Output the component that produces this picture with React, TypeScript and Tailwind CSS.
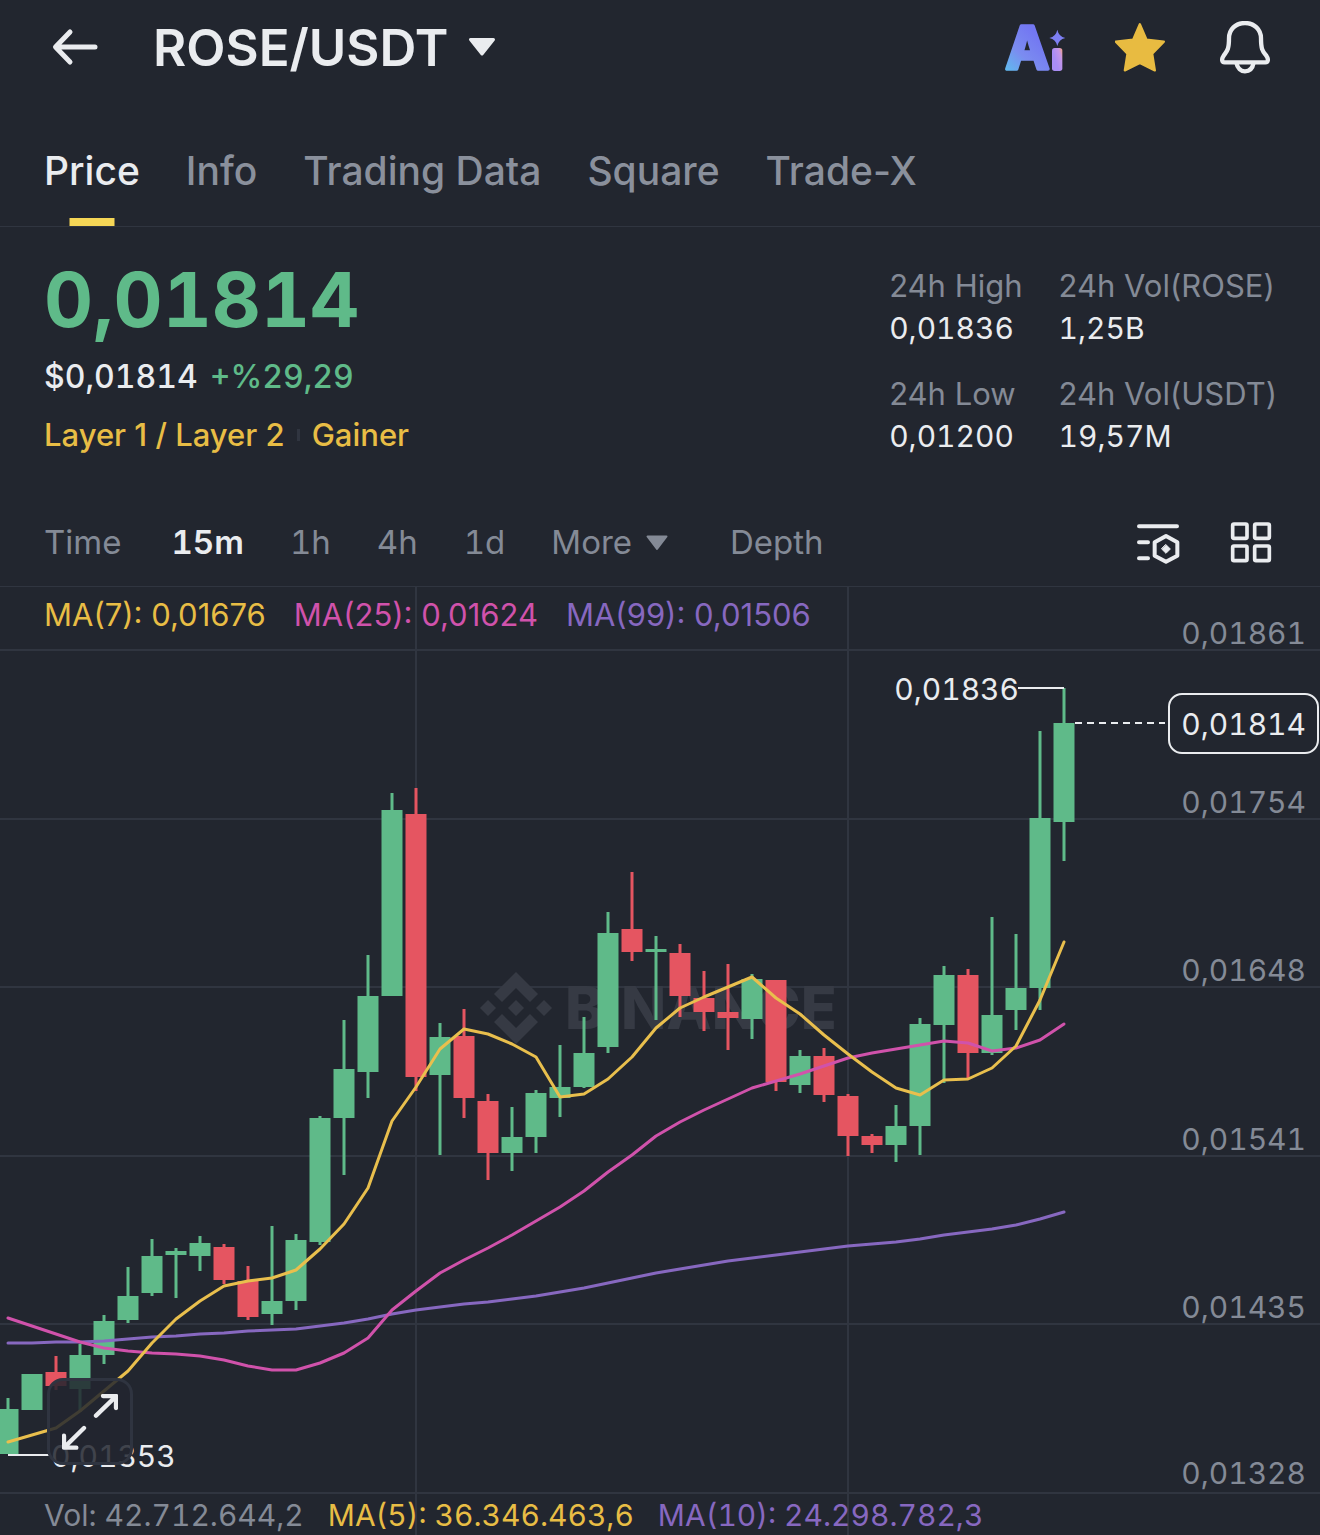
import React from "react";

type Candle = [high: number, bodyTop: number, bodyBottom: number, low: number, down?: boolean];

const GREEN = "#5fba89";
const RED = "#e55561";
const STEP = 24;
const FIRST_X = 8;

const candles: Candle[] = [
  [1398, 1409, 1454, 1454],
  [1374, 1374, 1410, 1410],
  [1356, 1372, 1386, 1390, true],
  [1344, 1355, 1389, 1412],
  [1315, 1321, 1355, 1364],
  [1267, 1296, 1320, 1323],
  [1239, 1256, 1293, 1296],
  [1248, 1251, 1255, 1298],
  [1236, 1243, 1256, 1271],
  [1244, 1247, 1280, 1284, true],
  [1266, 1281, 1317, 1320, true],
  [1226, 1301, 1314, 1325],
  [1234, 1240, 1301, 1310],
  [1116, 1118, 1242, 1245],
  [1020, 1069, 1118, 1175],
  [955, 996, 1072, 1098],
  [793, 810, 996, 996],
  [788, 814, 1077, 1091, true],
  [1023, 1037, 1075, 1155],
  [1009, 1036, 1098, 1118, true],
  [1094, 1101, 1153, 1180, true],
  [1107, 1137, 1153, 1171],
  [1090, 1093, 1137, 1153],
  [1045, 1087, 1098, 1117],
  [1017, 1053, 1087, 1088],
  [912, 933, 1047, 1053],
  [872, 929, 952, 961, true],
  [936, 949, 952, 1020],
  [944, 953, 996, 1017, true],
  [971, 998, 1012, 1031, true],
  [964, 1012, 1018, 1050, true],
  [974, 979, 1019, 1039],
  [980, 980, 1082, 1091, true],
  [1050, 1056, 1085, 1093],
  [1048, 1056, 1095, 1102, true],
  [1094, 1096, 1136, 1156, true],
  [1134, 1136, 1145, 1153, true],
  [1105, 1126, 1145, 1162],
  [1018, 1024, 1126, 1155],
  [966, 975, 1025, 1083],
  [969, 975, 1053, 1078, true],
  [917, 1015, 1053, 1055],
  [934, 988, 1010, 1030],
  [731, 818, 988, 1010],
  [688, 723, 822, 861],
];

const ma7 = [
  1442, 1435, 1428, 1411, 1391, 1371, 1343, 1319, 1301, 1286, 1281, 1278, 1270, 1249, 1224, 1188, 1121, 1087, 1049, 1029,
  1034, 1044, 1057, 1097, 1094, 1079, 1057, 1028, 1008, 997, 987, 977, 998, 1014, 1035, 1054, 1072, 1088, 1095, 1080,
  1079, 1068, 1046, 1000, 942,
];
const ma25 = [
  1318, 1326, 1334, 1342, 1348, 1351, 1353, 1354, 1356, 1360, 1366, 1370, 1370, 1363, 1353, 1338, 1310, 1291, 1273, 1260,
  1248, 1235, 1221, 1207, 1191, 1172, 1155, 1136, 1122, 1110, 1099, 1088, 1081, 1074, 1066, 1058, 1053, 1049, 1045, 1041,
  1043, 1051, 1048, 1040, 1024,
];
const ma99 = [
  1343, 1343, 1342, 1342, 1341, 1339, 1337, 1336, 1334, 1333, 1331, 1330, 1329, 1326, 1323, 1319, 1314, 1310, 1307, 1304,
  1302, 1299, 1296, 1292, 1288, 1283, 1278, 1273, 1269, 1265, 1261, 1258, 1255, 1252, 1249, 1246, 1244, 1242, 1239, 1235,
  1232, 1229, 1225, 1219, 1212,
];

const xAt = (i: number) => FIRST_X + i * STEP;
const toPoints = (ys: number[]) => ys.map((y, i) => `${xAt(i)},${y}`).join(" ");

const axis = [
  { label: "0,01861", line: 650, base: 644 },
  { label: "0,01754", line: 819, base: 813 },
  { label: "0,01648", line: 987, base: 981 },
  { label: "0,01541", line: 1156, base: 1150 },
  { label: "0,01435", line: 1324, base: 1318 },
  { label: "0,01328", line: 1493, base: 1484 },
];

function BackIcon() {
  return (
    <svg width="48" height="40" viewBox="51 27 48 40" fill="none" stroke="#eaecef" strokeWidth="5" strokeLinecap="round" strokeLinejoin="round" aria-hidden="true">
      <path d="M95 46H56M70 31L55.500 46L70 61" />
    </svg>
  );
}

function AiIcon() {
  return (
    <svg className="overflow-visible" width="62" height="48" viewBox="132 72 186 144" aria-hidden="true">
      <defs>
        <linearGradient id="ai-a" gradientUnits="userSpaceOnUse" x1="140" y1="205" x2="235" y2="110">
          <stop offset="0" stopColor="#62b6ee" />
          <stop offset="0.45" stopColor="#7b8cf0" />
          <stop offset="1" stopColor="#7377f2" />
        </linearGradient>
        <linearGradient id="ai-i" x1="1" y1="0" x2="0.300" y2="0.500">
          <stop offset="0" stopColor="#f2a27c" />
          <stop offset="0.4" stopColor="#c596e8" />
          <stop offset="1" stopColor="#a98df5" />
        </linearGradient>
      </defs>
      <text x="202" y="207" textAnchor="middle" fontFamily="Inter, sans-serif" fontWeight="700" fontSize="176" fill="url(#ai-a)" stroke="url(#ai-a)" strokeWidth="11" strokeLinejoin="round">
        A
      </text>
      <rect x="276" y="144" width="31" height="69" rx="8" fill="url(#ai-i)" />
      <path d="M292 89Q296 109 316 114Q296 119 292 138Q288 119 268 114Q288 109 292 89Z" fill="#7d7ff3" />
    </svg>
  );
}

function StarIcon() {
  return (
    <svg width="52" height="50" viewBox="466 68 155 150" fill="#e8bb41" stroke="#e8bb41" strokeWidth="7" strokeLinejoin="round" aria-hidden="true">
      <path d="M540 72L560 118L612 124L577 160L585 210L540 188L495 210L503 160L468 124L520 118Z" />
    </svg>
  );
}

function BellIcon() {
  return (
    <svg width="50" height="54" viewBox="779 62 150 162" fill="none" stroke="#eaecef" strokeWidth="13" strokeLinejoin="round" aria-hidden="true">
      <path d="M854 68C825 68 806 88 806 114C806 150 799 153 790 166C783 176 784 186 793 186H915C924 186 925 176 918 166C908 153 902 150 902 114C902 88 882 68 854 68Z" />
      <path d="M828 187C831 204 842 213 854 213C867 213 877 204 880 187" />
    </svg>
  );
}

function IndicatorIcon() {
  return (
    <svg width="44" height="42" viewBox="108 65 132 126" fill="none" stroke="#eaecef" strokeWidth="12" strokeLinecap="round" strokeLinejoin="round" aria-hidden="true">
      <path d="M117 78H231M117 126H144M117 174H144" />
      <path d="M198 107L232 126V166L198 184L164 166V126Z" />
      <path d="M198 133L211 146L198 159L185 146Z" fill="#eaecef" stroke="#eaecef" strokeWidth="3" />
    </svg>
  );
}

function LayoutIcon() {
  return (
    <svg width="42" height="42" viewBox="390 65 126 126" fill="none" stroke="#eaecef" strokeWidth="11" aria-hidden="true">
      <rect x="398" y="71" width="43" height="43" rx="4" />
      <rect x="464" y="71" width="44" height="43" rx="4" />
      <rect x="398" y="137" width="43" height="44" rx="4" />
      <rect x="464" y="137" width="44" height="44" rx="4" />
    </svg>
  );
}

function ExpandIcon() {
  return (
    <svg width="56" height="56" viewBox="186 580 168 168" fill="none" stroke="#eaecef" strokeWidth="13" strokeLinecap="round" strokeLinejoin="round" aria-hidden="true">
      <path d="M288 645L347 588M309 586H348V622" />
      <path d="M252 682L193 740M192 705V741H229" />
    </svg>
  );
}

function Header() {
  return (
    <header className="flex h-[95px] items-center justify-between pr-[50px] pl-[51px]">
      <div className="flex items-center gap-[54px]">
        <button type="button" aria-label="Back">
          <BackIcon />
        </button>
        <button type="button" className="flex items-center gap-5 text-[51px] leading-[60px] font-semibold text-[#eaecef]">
          ROSE/USDT
          <svg width="28" height="20" viewBox="0 0 28 20" fill="#eaecef" stroke="#eaecef" strokeWidth="3" strokeLinejoin="round" aria-hidden="true">
            <path d="M2.500 1.500H25.500L14 16Z" />
          </svg>
        </button>
      </div>
      <div className="flex items-center gap-[49px]">
        <button type="button" aria-label="AI assistant">
          <AiIcon />
        </button>
        <button type="button" aria-label="Favorite">
          <StarIcon />
        </button>
        <button type="button" aria-label="Alerts" className="ml-1">
          <BellIcon />
        </button>
      </div>
    </header>
  );
}

function Tabs() {
  return (
    <nav className="flex h-[132px] items-stretch gap-[46px] border-b border-[#303540] px-11 pt-[22px] text-[39px] font-medium text-[#8a909c]">
      <a href="#price" aria-current="page" className="relative flex items-center text-[#eaecef]">
        Price
        <span className="absolute bottom-0 left-1/2 h-2 w-[45px] -translate-x-1/2 bg-[#f5d656]" />
      </a>
      <a href="#info" className="flex items-center">Info</a>
      <a href="#data" className="flex items-center">Trading Data</a>
      <a href="#square" className="flex items-center">Square</a>
      <a href="#trade-x" className="flex items-center">Trade-X</a>
    </nav>
  );
}

function Stat({ label, value }: { label: string; value: string }) {
  return (
    <div>
      <dt className="text-[31px] text-[#848a96]">{label}</dt>
      <dd className="text-[30px] text-[#eaecef] tabular-nums">{value}</dd>
    </div>
  );
}

function Summary() {
  return (
    <section className="flex items-start justify-between pt-[30px] pr-[43px] pb-[43px] pl-11">
      <div>
        <div className="text-[76px] leading-[84px] font-bold text-[#5fba89] tabular-nums">0,01814</div>
        <div className="mt-4 flex gap-3 text-[32px] leading-10 font-medium tabular-nums">
          <span className="text-[#eaecef]">$0,01814</span>
          <span className="text-[#5fba89]">+%29,29</span>
        </div>
        <div className="mt-[18px] flex items-center gap-3 text-[31px] leading-10 font-medium text-[#e8bd45]">
          <a href="#layer">Layer 1 / Layer 2</a>
          <span className="h-3 w-[3px] bg-[#303540]" />
          <a href="#gainer">Gainer</a>
        </div>
      </div>
      <dl className="mt-2 grid grid-cols-[auto_auto] gap-x-9 gap-y-6 leading-[42px]">
        <Stat label="24h High" value="0,01836" />
        <Stat label="24h Vol(ROSE)" value="1,25B" />
        <Stat label="24h Low" value="0,01200" />
        <Stat label="24h Vol(USDT)" value="19,57M" />
      </dl>
    </section>
  );
}

function Intervals() {
  return (
    <div className="flex h-[87px] items-center justify-between border-b border-[#303540] pr-[48px] pl-11 text-[33px] text-[#848a96] tabular-nums">
      <div className="flex items-center gap-[46px]">
        <button type="button">Time</button>
        <button type="button" className="ml-1 font-semibold text-[#eaecef]">15m</button>
        <button type="button">1h</button>
        <button type="button">4h</button>
        <button type="button">1d</button>
        <button type="button" className="flex items-center gap-[14px]">
          More
          <svg width="22" height="16" viewBox="0 0 22 16" fill="#848a96" stroke="#848a96" strokeWidth="2" strokeLinejoin="round" aria-hidden="true">
            <path d="M1.500 1.500H20.500L11 14Z" />
          </svg>
        </button>
        <button type="button" className="ml-4">Depth</button>
      </div>
      <div className="flex items-center gap-[50px]">
        <button type="button" aria-label="Indicators">
          <IndicatorIcon />
        </button>
        <button type="button" aria-label="Chart layout">
          <LayoutIcon />
        </button>
      </div>
    </div>
  );
}

function Diamond({ cx }: { cx: number }) {
  return <path d={`M${cx} 1000L${cx + 8} 1008L${cx} 1016L${cx - 8} 1008Z`} />;
}

function Chart() {
  return (
    <section className="relative" aria-label="Price chart">
      <svg className="block h-auto w-full tabular-nums" viewBox="0 587 1320 948" fontFamily="Inter, sans-serif" fontSize="30">
        <g stroke="#303540" strokeWidth="2">
          {axis.map((a) => (
            <line key={a.line} x1="0" x2="1320" y1={a.line} y2={a.line} />
          ))}
          <line x1="416" x2="416" y1="587" y2="1535" />
          <line x1="848" x2="848" y1="587" y2="1535" />
        </g>

        <g fill="#363a44">
          <path d="M516 972L538 994L530 1002L516 988L502 1002L494 994Z" />
          <path d="M516 1044L538 1022L530 1014L516 1028L502 1014L494 1022Z" />
          <Diamond cx={488} />
          <Diamond cx={516} />
          <Diamond cx={544} />
          <text x="565" y="1029" fontSize="59" fontWeight="800">BINANCE</text>
        </g>

        {candles.map(([high, top, bottom, low, down], i) => (
          <g key={i} fill={down ? RED : GREEN}>
            <rect x={xAt(i) - 1.5} y={high} width="3" height={low - high} />
            <rect x={xAt(i) - 10.5} y={top} width="21" height={bottom - top} />
          </g>
        ))}

        <g fill="none" strokeWidth="3" strokeLinejoin="round" strokeLinecap="round">
          <polyline points={toPoints(ma99)} stroke="#8768c0" />
          <polyline points={toPoints(ma25)} stroke="#d052ab" />
          <polyline points={toPoints(ma7)} stroke="#e9bf4d" />
        </g>

        <g stroke="#eaecef" strokeWidth="2" fill="none">
          <path d="M1018 688H1064" />
          <path d="M8 1455H49" />
          <path d="M1075 723H1165" strokeDasharray="7 5" />
        </g>
        <g fill="#eaecef">
          <text x="1019" y="700" textAnchor="end">0,01836</text>
          <text x="51" y="1467">0,01353</text>
        </g>

        <g fill="#848a96" textAnchor="end">
          {axis.map((a) => (
            <text key={a.label} x="1306" y={a.base}>{a.label}</text>
          ))}
        </g>
        <rect x="1169" y="694" width="149" height="59" rx="13" fill="#22262f" stroke="#eaecef" strokeWidth="2" />
        <text x="1306" y="735" textAnchor="end" fill="#eaecef">0,01814</text>
      </svg>

      <div className="absolute top-2 left-11 flex gap-7 text-[31px] leading-10">
        <span className="text-[#e8bd45]">MA(7): 0,01676</span>
        <span className="text-[#d052ab]">MA(25): 0,01624</span>
        <span className="text-[#8768c0]">MA(99): 0,01506</span>
      </div>
      <div className="absolute bottom-0 left-11 flex gap-6 text-[30px] leading-10 tabular-nums">
        <span className="text-[#848a96]">Vol: 42.712.644,2</span>
        <span className="text-[#e8bd45]">MA(5): 36.346.463,6</span>
        <span className="text-[#8768c0]">MA(10): 24.298.782,3</span>
      </div>
      <button
        type="button"
        aria-label="Full screen"
        className="absolute bottom-[70px] left-[47px] flex h-[87px] w-[86px] items-center justify-center rounded-2xl border-[3px] border-[#2f3440] bg-[#22262f]/85"
      >
        <ExpandIcon />
      </button>
    </section>
  );
}

export default function App() {
  return (
    <main className="w-full overflow-hidden bg-[#22262f] font-['Inter',sans-serif]">
      <Header />
      <Tabs />
      <Summary />
      <Intervals />
      <Chart />
    </main>
  );
}
